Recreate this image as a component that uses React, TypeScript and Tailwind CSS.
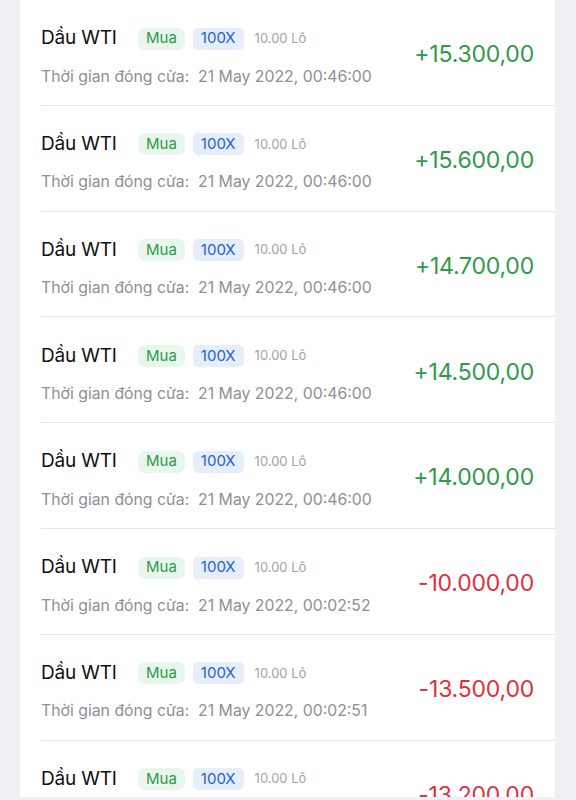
import React from "react";

type Row = { amount: string; time: string; positive: boolean };

const rows: Row[] = [
  { amount: "+15.300,00", time: "21 May 2022, 00:46:00", positive: true },
  { amount: "+15.600,00", time: "21 May 2022, 00:46:00", positive: true },
  { amount: "+14.700,00", time: "21 May 2022, 00:46:00", positive: true },
  { amount: "+14.500,00", time: "21 May 2022, 00:46:00", positive: true },
  { amount: "+14.000,00", time: "21 May 2022, 00:46:00", positive: true },
  { amount: "-10.000,00", time: "21 May 2022, 00:02:52", positive: false },
  { amount: "-13.500,00", time: "21 May 2022, 00:02:51", positive: false },
  { amount: "-13.200,00", time: "21 May 2022, 00:02:50", positive: false },
];

export default function App() {
  return (
    <div
      className="w-[576px] h-[800px] overflow-hidden bg-[#eef0f4] pl-5 pr-[21px]"
      style={{ fontFamily: "Inter, 'Noto Sans', sans-serif" }}
    >
      <div className="bg-white h-[797px] overflow-hidden">
        {rows.map((r, i) => (
          <div key={i} className="pl-[21px]">
            <div className="h-[105.8px] flex items-center pr-[21px] border-b border-[#e6e6ea]">
              <div className="flex-1 flex flex-col mt-[11px]">
                <div className="flex items-center h-[22px]">
                  <span className="text-[19px] text-[#111] tracking-[-0.2px] w-[97px]">Dầu WTI</span>
                  <span className="h-[22px] px-[8px] rounded-[7px] bg-[#e9f6ec] text-[#2f9a49] text-[15px] flex items-center">Mua</span>
                  <span className="ml-[8px] h-[22px] px-[8px] rounded-[5px] bg-[#e6eefc] text-[#1d5fe0] text-[15px] flex items-center">100X</span>
                  <span className="ml-[11px] text-[13px] text-[#a3a3a8]">10.00 Lô</span>
                </div>
                <div className="mt-[15px] text-[15.8px] text-[#8f8f94] whitespace-pre">
                  {"Thời gian đóng cửa:  " + r.time}
                </div>
              </div>
              <div
                className={
                  "text-[23px] tracking-[-0.2px] mt-[4px] " +
                  (r.positive ? "text-[#2f9a49]" : "text-[#e0303e]")
                }
              >
                {r.amount}
              </div>
            </div>
          </div>
        ))}
      </div>
    </div>
  );
}
